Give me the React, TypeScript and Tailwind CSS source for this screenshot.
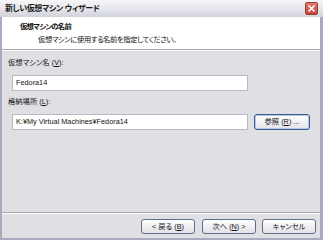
export default function App() {
  return (
    <div className="w-[323px] h-[240px] flex flex-col bg-[#a9a9bf] font-['Liberation_Sans','Noto_Sans_CJK_JP',sans-serif] text-[7.3px] leading-[10px] text-[#111] [font-feature-settings:'palt']">
      {/* title bar */}
      <div className="h-[17px] flex items-center justify-between pl-[5px] pr-[5px] bg-gradient-to-b from-[#f7f7f9] via-[#e6e6ec] to-[#d2d2dc]">
        <span className="font-bold text-[8px] tracking-[-0.4px] text-[#1a1a1a]">新しい仮想マシン ウィザード</span>
        <div className="w-[13px] h-[13px] rounded-[2px] bg-gradient-to-b from-[#e07a6e] to-[#c8423a] border border-[#9c3a32] flex items-center justify-center">
          <svg width="9" height="9" viewBox="0 0 9 9">
            <path d="M1.5 1.5 L7.5 7.5 M7.5 1.5 L1.5 7.5" stroke="white" strokeWidth="1.6" />
          </svg>
        </div>
      </div>

      <div className="flex-1 flex flex-col ml-[2px] mr-[3px] mb-[2px] bg-[#e0dfe3]">
        {/* header */}
        <div className="h-[33px] bg-white border-b border-[#a7a6aa] flex flex-col pt-[5px]">
          <div className="pl-[18px] font-bold tracking-[-0.7px]">仮想マシンの名前</div>
          <div className="pl-[36px] mt-[3px] tracking-[-0.4px]">仮想マシンに使用する名前を指定してください。</div>
        </div>
        <div className="h-px bg-white" />

        {/* body */}
        <div className="flex flex-col pl-[6px] pt-[7px]">
          <div>
            仮想マシン名 (<span className="underline">V</span>):
          </div>
          <div className="ml-[4px] mt-[7px] w-[236px] h-[16px] bg-white border border-[#b9b9c4] flex items-center pl-[3px]">
            Fedora14
          </div>
          <div className="mt-[6px]">
            格納場所 (<span className="underline">L</span>):
          </div>
          <div className="flex mt-[7px] ml-[4px] gap-[6px]">
            <div className="w-[236px] h-[16px] bg-white border border-[#b9b9c4] flex items-center pl-[3px]">
              K:¥My Virtual Machines¥Fedora14
            </div>
            <button className="w-[56px] h-[16px] rounded-[3px] border border-[#3d5a8a] bg-gradient-to-b from-white to-[#e4e4ea] shadow-[inset_0_0_0_1px_#b4c8ec] flex items-center justify-center text-[7.3px]">
              参照 (<span className="underline">R</span>) ...
            </button>
          </div>
        </div>

        <div className="flex-1" />

        {/* footer */}
        <div className="h-px bg-[#a7a6aa]" />
        <div className="h-px bg-white" />
        <div className="flex justify-end pt-[5px] pb-[4px] pr-[4px]">
          <button className="w-[54px] h-[15px] rounded-[3px] border border-[#5e6e8e] bg-gradient-to-b from-white to-[#e2e2e8] flex items-center justify-center text-[7.3px]">
            &lt; 戻る (<span className="underline">B</span>)
          </button>
          <button className="ml-[7px] w-[54px] h-[15px] rounded-[3px] border border-[#5e6e8e] bg-gradient-to-b from-white to-[#e2e2e8] flex items-center justify-center text-[7.3px]">
            次へ (<span className="underline">N</span>) &gt;
          </button>
          <button className="ml-[6px] w-[54px] h-[15px] rounded-[3px] border border-[#5e6e8e] bg-gradient-to-b from-white to-[#e2e2e8] flex items-center justify-center text-[7.3px]">
            キャンセル
          </button>
        </div>
      </div>
    </div>
  )
}
